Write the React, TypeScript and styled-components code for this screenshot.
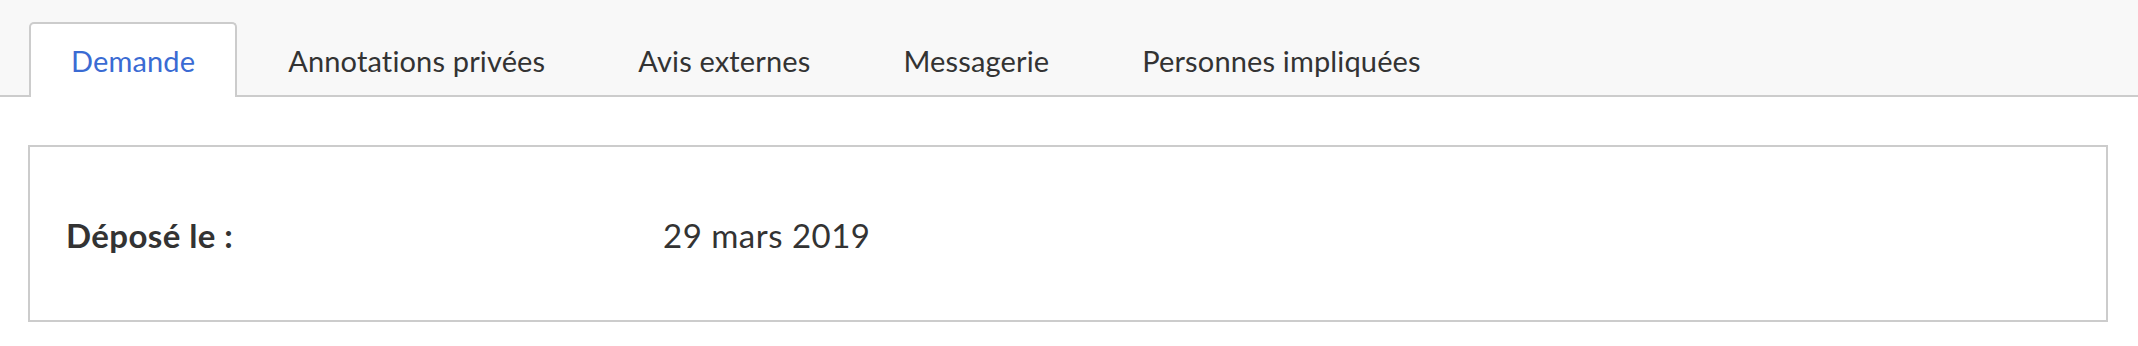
import React, { useState } from "react";
import styled, { createGlobalStyle } from "styled-components";

const GlobalStyle = createGlobalStyle`
  html, body {
    margin: 0;
    padding: 0;
    background: #ffffff;
  }
  body {
    font-family: Lato, "Open Sans", "Liberation Sans", sans-serif;
    color: #333333;
  }
`;

const TABS = [
  "Demande",
  "Annotations privées",
  "Avis externes",
  "Messagerie",
  "Personnes impliquées",
];

const App = () => {
  const [active, setActive] = useState(0);

  return (
    <Wrapper>
      <GlobalStyle />
      <TabBar>
        {TABS.map((label, i) => (
          <Tab key={label} active={i === active} onClick={() => setActive(i)}>
            {label}
          </Tab>
        ))}
      </TabBar>
      <Content>
        <Card>
          <Row>
            <Label>Déposé le :</Label>
            <Value>29 mars 2019</Value>
          </Row>
        </Card>
      </Content>
    </Wrapper>
  );
};

const Wrapper = styled.div`
  width: 100%;
`;

const TabBar = styled.nav`
  display: flex;
  align-items: flex-end;
  column-gap: 9px;
  height: 97px;
  box-sizing: border-box;
  padding: 22px 0 0 29px;
  background-color: #f8f8f8;
  border-bottom: 2px solid #cccccc;
`;

const Tab = styled.button<{ active: boolean }>`
  height: 75px;
  margin-bottom: -2px;
  padding: 0 40px;
  box-sizing: border-box;
  border: 2px solid ${(p) => (p.active ? "#cccccc" : "transparent")};
  border-bottom: none;
  border-radius: 5px 5px 0 0;
  background-color: ${(p) => (p.active ? "#ffffff" : "transparent")};
  color: ${(p) => (p.active ? "#3a6bd3" : "#333333")};
  font-family: inherit;
  font-size: 29px;
  letter-spacing: 0.15px;
  cursor: pointer;
  white-space: nowrap;
`;

const Content = styled.main`
  padding: 48px 30px 0 28px;
`;

const Card = styled.section`
  height: 177px;
  box-sizing: border-box;
  border: 2px solid #cccccc;
  display: flex;
  align-items: center;
  padding: 0 36px;
`;

const Row = styled.div`
  display: grid;
  grid-template-columns: 597px auto;
  align-items: center;
  padding-top: 2px;
`;

const Label = styled.span`
  font-size: 33px;
  font-weight: 700;
  letter-spacing: 0.4px;
`;

const Value = styled.span`
  font-size: 33px;
  letter-spacing: 0.5px;
`;

export default App;
